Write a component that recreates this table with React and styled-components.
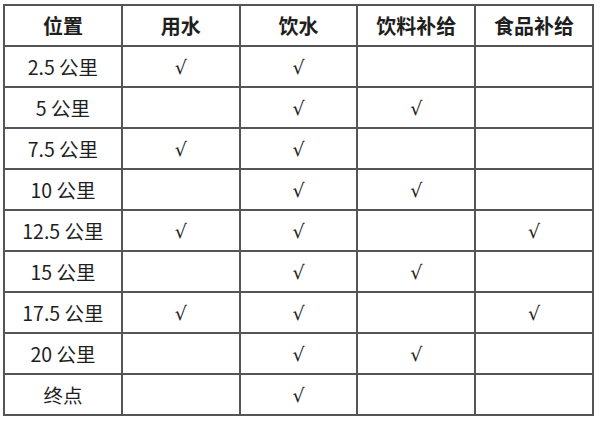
import React from 'react';
import styled, { createGlobalStyle } from 'styled-components';

const GlobalStyle = createGlobalStyle`
    html, body {
        margin: 0;
        padding: 0;
        background: #ffffff;
    }
    body {
        font-family: "Noto Sans CJK SC", "Noto Sans", sans-serif;
        color: #1e1e1e;
    }
`;

const Page = styled.div`
    padding: 4px 9px 0 3px;
`;

const Table = styled.table`
    width: 591px;
    border-collapse: collapse;
    table-layout: fixed;
`;

const HeadCell = styled.th`
    height: 39px;
    padding: 0;
    border: 2px solid #555;
    font-size: 20px;
    font-weight: 700;
    text-align: center;
    vertical-align: middle;
    line-height: 1;
`;

const Cell = styled.td`
    height: 39px;
    padding: 0;
    border: 2px solid #555;
    font-size: 19.5px;
    font-weight: 400;
    text-align: center;
    vertical-align: middle;
    line-height: 1;
`;

const Check = styled.span`
    font-family: "DejaVu Sans", sans-serif;
    font-size: 19px;
    font-weight: 400;
    color: #222;
`;

const headers = ['位置', '用水', '饮水', '饮料补给', '食品补给'];

const rows = [
    ['2.5 公里', true, true, false, false],
    ['5 公里', false, true, true, false],
    ['7.5 公里', true, true, false, false],
    ['10 公里', false, true, true, false],
    ['12.5 公里', true, true, false, true],
    ['15 公里', false, true, true, false],
    ['17.5 公里', true, true, false, true],
    ['20 公里', false, true, true, false],
    ['终点', false, true, false, false],
];

const App = () => {
    return (
        <Page>
            <GlobalStyle />
            <Table>
                <thead>
                    <tr>
                        {headers.map((h) => (
                            <HeadCell key={h}>{h}</HeadCell>
                        ))}
                    </tr>
                </thead>
                <tbody>
                    {rows.map(([place, ...marks]) => (
                        <tr key={place}>
                            <Cell>{place}</Cell>
                            {marks.map((m, i) => (
                                <Cell key={i}>{m ? <Check>√</Check> : null}</Cell>
                            ))}
                        </tr>
                    ))}
                </tbody>
            </Table>
        </Page>
    );
};

export default App;
